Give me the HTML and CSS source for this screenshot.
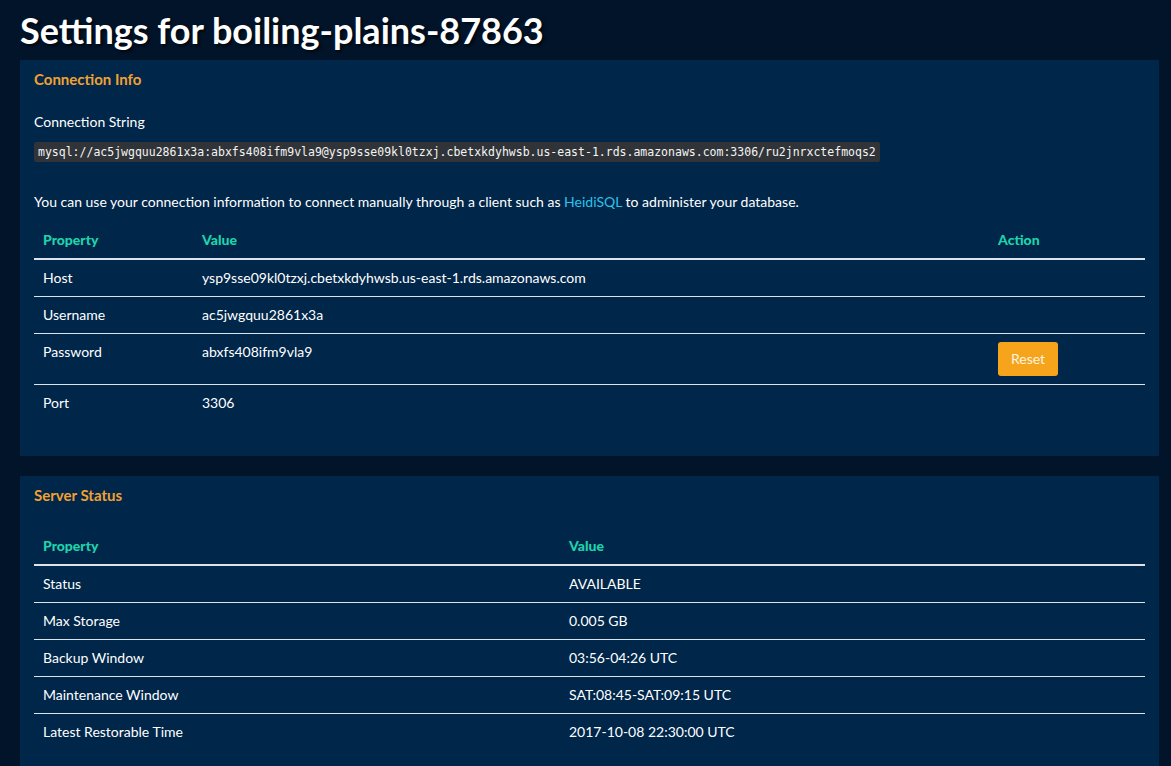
FILE: index.html
```html
<!DOCTYPE html>
<html>
<head>
<meta charset="utf-8">
<link rel="stylesheet" href="styles.css">
</head>
<body>
<h1 class="title">Settings for boiling-plains-87863</h1>

<section class="panel">
  <h3 class="panel-title">Connection Info</h3>
  <p class="label">Connection String</p>
  <div class="conn-wrap"><code class="conn">mysql://ac5jwgquu2861x3a:abxfs408ifm9vla9@ysp9sse09kl0tzxj.cbetxkdyhwsb.us-east-1.rds.amazonaws.com:3306/ru2jnrxctefmoqs2</code></div>
  <p class="info">You can use your connection information to connect manually through a client such as <a href="#" class="link">HeidiSQL</a> to administer your database.</p>
  <table class="tbl">
    <thead>
      <tr><th class="c1">Property</th><th class="c2">Value</th><th class="c3">Action</th></tr>
    </thead>
    <tbody>
      <tr><td>Host</td><td>ysp9sse09kl0tzxj.cbetxkdyhwsb.us-east-1.rds.amazonaws.com</td><td></td></tr>
      <tr><td>Username</td><td>ac5jwgquu2861x3a</td><td></td></tr>
      <tr><td>Password</td><td>abxfs408ifm9vla9</td><td><button class="btn">Reset</button></td></tr>
      <tr><td>Port</td><td>3306</td><td></td></tr>
    </tbody>
  </table>
</section>

<section class="panel panel-last">
  <h3 class="panel-title">Server Status</h3>
  <table class="tbl tbl-status">
    <thead>
      <tr><th class="s1">Property</th><th>Value</th></tr>
    </thead>
    <tbody>
      <tr><td>Status</td><td>AVAILABLE</td></tr>
      <tr><td>Max Storage</td><td>0.005 GB</td></tr>
      <tr><td>Backup Window</td><td>03:56-04:26 UTC</td></tr>
      <tr><td>Maintenance Window</td><td>SAT:08:45-SAT:09:15 UTC</td></tr>
      <tr><td>Latest Restorable Time</td><td>2017-10-08 22:30:00 UTC</td></tr>
    </tbody>
  </table>
</section>
</body>
</html>
```
FILE: styles.css
```css
html, body {
  margin: 0;
  padding: 0;
  background: #011429;
}
body {
  padding: 0 12px 0 20px;
  font-family: Lato, "Open Sans", sans-serif;
  font-size: 14px;
  line-height: 20px;
  color: #ffffff;
}
.title {
  margin: 0;
  padding: 10px 0 10px;
  font-size: 36px;
  line-height: 40px;
  font-weight: 700;
  color: #ffffff;
  text-shadow: 2px 2px 3px rgba(0,0,0,0.6);
}
.panel {
  background: #00264a;
  padding: 9px 14px 35px;
  margin-bottom: 20px;
}
.panel-last {
  padding-bottom: 40px;
}
.panel-title {
  margin: 0 0 23px;
  font-size: 15px;
  line-height: 20px;
  font-weight: 700;
  color: #f0a132;
}
.label {
  margin: 0 0 10px;
}
.conn-wrap {
  display: flex;
}
.conn {
  display: block;
  font-family: "DejaVu Sans Mono", "Liberation Mono", monospace;
  font-size: 11.5px;
  line-height: 16px;
  padding: 2px 4px;
  background: #303438;
  color: #f4f4f4;
  border-radius: 2px;
}
.info {
  margin: 30px 0 10px;
}
.link {
  color: #2cc2ea;
  text-decoration: none;
}
.tbl {
  width: 100%;
  border-collapse: collapse;
}
.tbl th {
  text-align: left;
  color: #1fd3ab;
  font-weight: 900;
  padding: 8px 9px;
  line-height: 20px;
  border-bottom: 2px solid #dde3ea;
}
.tbl td {
  padding: 8px 9px;
  line-height: 20px;
  vertical-align: top;
  border-top: 1px solid #dde3ea;
}
.tbl tbody tr:first-child td {
  border-top: none;
}
.c1 { width: 141px; }
.c3 { width: 138px; }
.s1 { width: 508px; }
.btn {
  font-family: Lato, sans-serif;
  font-size: 14px;
  line-height: 20px;
  background: #f5a41c;
  color: #fff5e0;
  border: none;
  border-radius: 3px;
  padding: 7px 13px;
  height: 34px;
  cursor: pointer;
}
```
